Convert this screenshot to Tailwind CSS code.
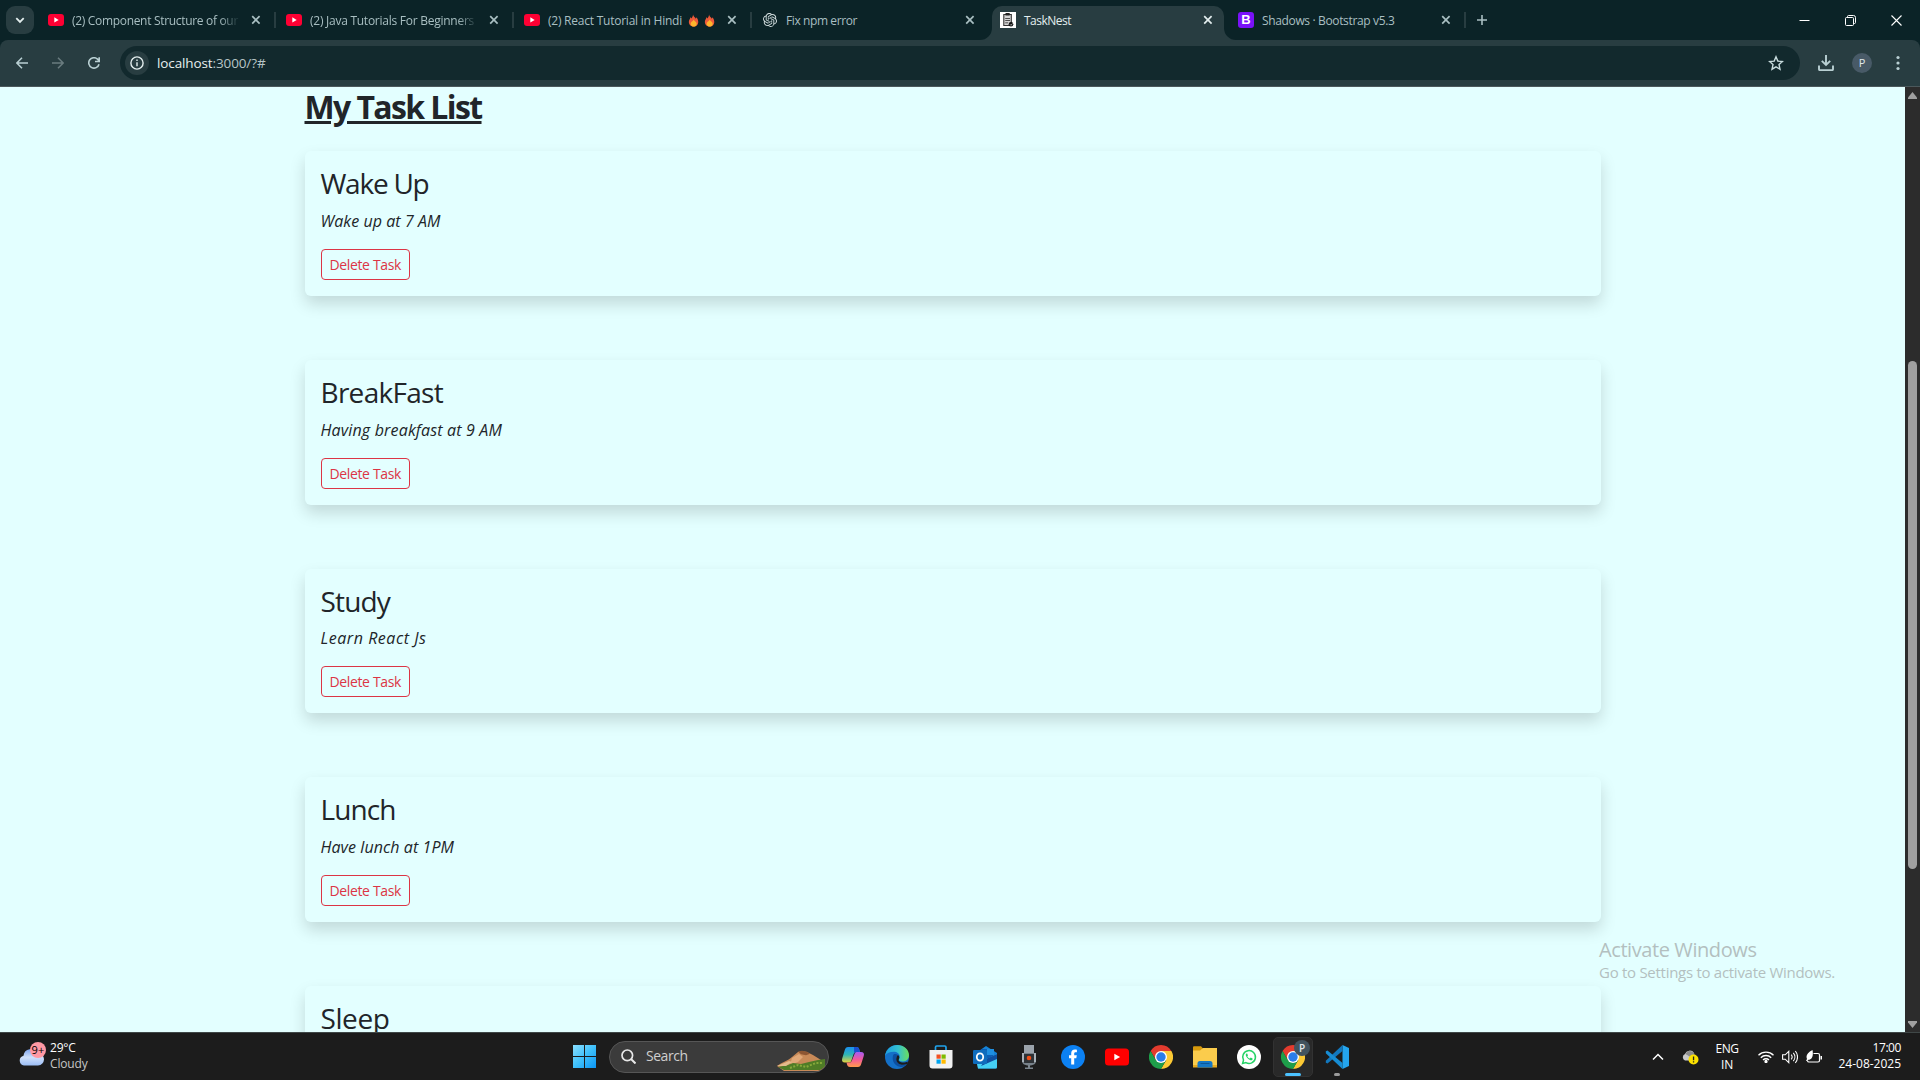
<!DOCTYPE html>
<html lang="en">
<head>
<meta charset="utf-8">
<title>TaskNest</title>
<script src="https://cdn.jsdelivr.net/npm/@tailwindcss/browser@4"></script>
</head>
<body class="w-[1920px] h-[1080px] overflow-hidden flex flex-col bg-[#1c1c1c] font-['Segoe_UI','Open_Sans',sans-serif] text-xs">

<svg class="hidden">
  <symbol id="yt" viewBox="0 0 16 12"><rect width="16" height="12" rx="3" fill="#ff0033"/><path d="M6.3 3.3v5.2L10.7 6z" fill="#fff"/></symbol>
  <symbol id="x" viewBox="0 0 10 10"><path d="M1.2 1.2l7.4 7.4M8.600 1.200l-7.400 7.400" stroke="currentColor" stroke-width="1.7" fill="none"/></symbol>
  <symbol id="fire" viewBox="0 0 12 14"><path d="M5.500.5C6 3 8 3.500 8.500 5c.500-.500.500-1 .5-1.500C10.500 5 11.300 7 11.200 9c-.1 3-2.200 4.700-5 4.700S1 12 .9 9C.8 6.500 2.500 5.500 2.600 3.500c.6.400 1 .8 1.200 1.300C4.800 3.500 5.500 2 5.500.5z" fill="#ee5a3a"/><path d="M6.200 6c.3 1.500 3.400 2.400 3.300 4.700-.1 1.800-1.500 2.800-3.300 2.800S2.800 12.400 2.800 10.700C2.800 8.500 5.700 8 6.200 6z" fill="#fdb52c"/></symbol>
  <symbol id="chrome" viewBox="0 0 24 24">
    <path d="M12 0a12 12 0 0 1 10.400 6H12L6.800 15 1.600 6A12 12 0 0 1 12 0z" fill="#e33b2e"/>
    <path d="M22.400 6A12 12 0 0 1 12 24l5.200-9L12 6z" fill="#fcc934"/>
    <path d="M12 24A12 12 0 0 1 1.600 6l5.200 9 5.200 3 5.200-3z" fill="#1e9e4a"/>
    <circle cx="12" cy="12" r="6" fill="#fff"/><circle cx="12" cy="12" r="4.700" fill="#2b7de9"/>
  </symbol>
</svg>

<!-- Tab strip -->
<header class="relative h-10 shrink-0 bg-[#0b2327] flex items-center text-[#a9bfc2]">
  <div class="ml-1.5 w-7 h-7 rounded-[9px] bg-[#283d41] flex items-center justify-center text-[#e3eeee]">
    <svg class="w-2.5 h-2.5" viewBox="0 0 10 10"><path d="M1.300 3.200L5 6.900l3.700-3.700" stroke="currentColor" stroke-width="1.800" fill="none"/></svg>
  </div>
  <div class="w-[238px] ml-0.5 h-10 flex items-center pl-3 relative">
    <svg class="w-4 h-3 shrink-0"><use href="#yt"/></svg>
    <span class="ml-2 w-[168px] h-5 leading-[21px] overflow-hidden whitespace-nowrap mask-r-from-88% mask-r-to-100%"><span data-w="166">(2) Component Structure of our</span></span>
    <svg class="w-[10px] h-[10px] ml-[11px] shrink-0"><use href="#x"/></svg>
    <i class="absolute right-[-2px] w-0.5 h-4 bg-[#283d41]"></i>
  </div>
  <div class="w-[238px] h-10 flex items-center pl-3 relative">
    <svg class="w-4 h-3 shrink-0"><use href="#yt"/></svg>
    <span class="ml-2 w-[168px] h-5 leading-[21px] overflow-hidden whitespace-nowrap mask-r-from-88% mask-r-to-100%"><span data-w="164">(2) Java Tutorials For Beginners</span></span>
    <svg class="w-[10px] h-[10px] ml-[11px] shrink-0"><use href="#x"/></svg>
    <i class="absolute right-[-2px] w-0.5 h-4 bg-[#283d41]"></i>
  </div>
  <div class="w-[238px] h-10 flex items-center pl-3 relative">
    <svg class="w-4 h-3 shrink-0"><use href="#yt"/></svg>
    <span class="ml-2 w-[168px] h-5 leading-[21px] overflow-hidden whitespace-nowrap flex items-center"><span data-w="134">(2) React Tutorial in Hindi</span><svg class="ml-1.5 w-[11px] h-[13px]"><use href="#fire"/></svg><svg class="ml-[5px] w-[11px] h-[13px]"><use href="#fire"/></svg></span>
    <svg class="w-[10px] h-[10px] ml-[11px] shrink-0"><use href="#x"/></svg>
    <i class="absolute right-[-2px] w-0.5 h-4 bg-[#283d41]"></i>
  </div>
  <div class="w-[238px] h-10 flex items-center pl-3 relative">
    <svg class="w-4 h-4 p-px shrink-0" viewBox="0 0 24 24" fill="#d4dfe0"><path d="M22.280 9.820a5.980 5.980 0 0 0-.52-4.910 6.050 6.050 0 0 0-6.510-2.900A6.070 6.070 0 0 0 4.980 4.180a5.980 5.980 0 0 0-4 2.900 6.050 6.050 0 0 0 .74 7.100 5.980 5.980 0 0 0 .51 4.910 6.050 6.050 0 0 0 6.510 2.900A5.980 5.980 0 0 0 13.260 24a6.060 6.060 0 0 0 5.770-4.210 5.990 5.990 0 0 0 4-2.900 6.060 6.060 0 0 0-.75-7.070zm-9.020 12.610a4.480 4.480 0 0 1-2.880-1.040l.14-.08 4.780-2.760a.8.8 0 0 0 .39-.68v-6.740l2.020 1.170a.07.07 0 0 1 .04.050v5.580a4.500 4.500 0 0 1-4.490 4.500zM3.600 18.300a4.470 4.470 0 0 1-.53-3.010l.14.080 4.780 2.760a.77.77 0 0 0 .78 0l5.840-3.370v2.330a.08.08 0 0 1-.03.060L9.740 19.950A4.500 4.500 0 0 1 3.600 18.300zM2.340 7.900a4.490 4.490 0 0 1 2.370-1.970V11.600a.77.77 0 0 0 .39.680l5.810 3.350-2.020 1.170a.08.08 0 0 1-.07 0l-4.830-2.790A4.500 4.500 0 0 1 2.340 7.900zm16.600 3.860l-5.840-3.390 2.020-1.160a.08.08 0 0 1 .07 0l4.830 2.790a4.490 4.490 0 0 1-.68 8.100v-5.680a.79.79 0 0 0-.4-.66zm2.010-3.020l-.14-.09-4.770-2.780a.78.78 0 0 0-.79 0L9.410 9.230V6.900a.07.07 0 0 1 .03-.06l4.830-2.790a4.500 4.500 0 0 1 6.680 4.660zM8.310 12.860l-2.020-1.160a.08.08 0 0 1-.04-.06V6.070a4.500 4.500 0 0 1 7.380-3.450l-.14.08-4.780 2.760a.8.8 0 0 0-.39.680zm1.100-2.370L12.010 9l2.610 1.500v3l-2.600 1.500-2.610-1.500z"/></svg>
    <span class="ml-2 w-[168px] h-5 leading-[21px] whitespace-nowrap"><span data-w="71">Fix npm error</span></span>
    <svg class="w-[10px] h-[10px] ml-[11px] shrink-0"><use href="#x"/></svg>
  </div>
  <div class="w-[238px] h-10 flex items-center pl-3 relative text-[#e3eeee]">
    <svg class="absolute left-[-8px] top-1.5 w-[256px] h-[34px]" viewBox="0 0 256 34"><path d="M0 34a12 12 0 0 0 12-12V10A10 10 0 0 1 22 0h212a10 10 0 0 1 10 10v12a12 12 0 0 0 12 12z" fill="#283d41"/></svg>
    <svg class="relative w-4 h-4 shrink-0" viewBox="0 0 16 16"><rect width="16" height="16" fill="#fff"/><path d="M3.800 2.500h7.500v11H3.800z" fill="#d5d5d5" stroke="#333" stroke-width="1.100"/><path d="M5.500 1h4.200v2.500H5.500zM5.200 6h4.800v.8H5.200zM5.200 8.200h4.800V9H5.200zM5.200 10.400h3v.8h-3z" fill="#222"/><circle cx="11" cy="12.300" r="2.300" fill="#111"/><path d="M10 12.300l1 1 1.500-1.800" stroke="#fff" stroke-width=".6" fill="none"/></svg>
    <span class="relative ml-2 w-[168px] h-5 leading-[21px]"><span data-w="47">TaskNest</span></span>
    <svg class="relative w-[10px] h-[10px] ml-[11px] shrink-0"><use href="#x"/></svg>
  </div>
  <div class="w-[238px] h-10 flex items-center pl-3 relative">
    <div class="w-4 h-4 shrink-0 rounded-[3px] bg-[#7a12f9] text-white text-[13px] leading-4 font-semibold text-center font-['Liberation_Sans',sans-serif]">B</div>
    <span class="ml-2 w-[168px] h-5 leading-[21px] whitespace-nowrap"><span data-w="132.5">Shadows · Bootstrap v5.3</span></span>
    <svg class="w-[10px] h-[10px] ml-[11px] shrink-0"><use href="#x"/></svg>
    <i class="absolute right-[-2px] w-0.5 h-4 bg-[#283d41]"></i>
  </div>
  <svg class="ml-[13px] w-[10px] h-[10px]" viewBox="0 0 10 10"><path d="M5 0v10M0 5h10" stroke="currentColor" stroke-width="1.600"/></svg>
  <div class="ml-auto pr-[18px] flex items-center gap-[35px] text-white">
    <svg class="w-[11px] h-[11px]" viewBox="0 0 11 11"><path d="M.5 5.500h10" stroke="currentColor"/></svg>
    <svg class="w-[11px] h-[11px]" viewBox="0 0 11 11" fill="none" stroke="currentColor"><rect x=".5" y="2.500" width="8" height="8" rx="1"/><path d="M2.500 2V1.500a1 1 0 0 1 1-1H8.500a2 2 0 0 1 2 2v5a1 1 0 0 1-1 1H9"/></svg>
    <svg class="w-[11px] h-[11px]" viewBox="0 0 11 11"><path d="M.5.5l10 10M10.500.5l-10 10" stroke="currentColor" stroke-width="1.100"/></svg>
  </div>
</header>

<!-- Toolbar -->
<div class="h-[47px] shrink-0 bg-[#0b2327]">
  <div class="h-full bg-[#283d41] rounded-t-lg border-b border-[#4b585b] flex items-center text-[#b9d0d3]">
    <svg class="ml-4 w-3 h-3" viewBox="0 0 12 12" fill="none" stroke="currentColor" stroke-width="1.500"><path d="M12 6H1.200M6 .8L.9 6 6 11.200"/></svg>
    <svg class="ml-6 w-3 h-3 text-[#6a7c7f]" viewBox="0 0 12 12" fill="none" stroke="currentColor" stroke-width="1.500"><path d="M0 6h10.800M6 .8L11.100 6 6 11.200"/></svg>
    <svg class="ml-6 w-3 h-3" viewBox="0 0 12 12" fill="none" stroke="currentColor" stroke-width="1.600"><path d="M11 7.200A5.200 5.200 0 1 1 9.800 2.400L11 3.800M11.200.2v4.300H7"/></svg>
    <div class="ml-5 w-[1680px] h-[34px] rounded-full bg-[#12292d] flex items-center pl-[5px]">
      <div class="w-6 h-6 rounded-full bg-[#283d41] flex items-center justify-center text-[#e3eeee]">
        <svg class="w-3.5 h-3.5" viewBox="0 0 14 14"><circle cx="7" cy="7" r="6.100" fill="none" stroke="currentColor" stroke-width="1.400"/><path d="M6.300 6.200h1.400v4H6.300zM6.300 3.600h1.400V5H6.300z" fill="currentColor"/></svg>
      </div>
      <div class="ml-2 text-[13.5px] text-[#e6efef]"><span data-w="108.500">localhost<span class="text-[#b7c5c7]">:3000/?#</span></span></div>
      <svg class="ml-auto mr-4 w-4 h-4 text-[#c8dcde]" viewBox="0 0 16 16"><path d="M8 1.800l1.800 4.300 4.700.4-3.500 3.100 1 4.600L8 11.800l-4 2.400 1-4.600-3.500-3.100 4.700-.4z" fill="none" stroke="currentColor" stroke-width="1.400"/></svg>
    </div>
    <svg class="ml-[18px] w-4 h-4" viewBox="0 0 16 16" fill="none" stroke="currentColor" stroke-width="1.900"><path d="M8 0v9.500M3.800 5.800L8 10l4.200-4.200M1 10.500v3.700c0 .6.300.9.900.9h12.200c.6 0 .9-.3.900-.9v-3.700"/></svg>
    <div class="ml-[18px] w-5 h-5 rounded-full bg-[#485a67] text-[11px] leading-5 text-center text-[#e0e7ea]">P</div>
    <svg class="w-1 ml-6 h-4" viewBox="0 0 4 16" fill="currentColor"><circle cx="2" cy="2.500" r="1.600"/><circle cx="2" cy="8" r="1.600"/><circle cx="2" cy="13.500" r="1.600"/></svg>
  </div>
</div>

<!-- Page -->
<div class="relative h-[945px] shrink-0 flex bg-[#e3ffff]">
  <main class="flex-1 overflow-hidden text-[#212529] font-['Trebuchet_MS','Open_Sans',sans-serif] text-base">
    <div class="w-[1320px] mx-auto px-3 pt-px">
      <h2 class="text-[32px] leading-[38.400px] font-bold underline decoration-[3px] underline-offset-[2px] whitespace-nowrap"><span data-w="177">My Task List</span></h2>
      <div class="mt-[25px] flex flex-col gap-16">
        <section class="p-4 rounded-md shadow-[0_8px_16px_rgba(0,0,0,0.15)]">
          <h3 class="text-[28px] leading-[33.600px] mb-2"><span data-w="108">Wake Up</span></h3>
          <p class="italic leading-6 mb-4"><span data-w="120">Wake up at 7 AM</span></p>
          <button class="block w-[89.500px] h-[31px] border border-[#dc3545] rounded-[4px] text-[#dc3545] text-sm leading-[21px] py-1 whitespace-nowrap"><span data-w="71.500">Delete Task</span></button>
        </section>
        <section class="p-4 rounded-md shadow-[0_8px_16px_rgba(0,0,0,0.15)]">
          <h3 class="text-[28px] leading-[33.600px] mb-2"><span data-w="122.500">BreakFast</span></h3>
          <p class="italic leading-6 mb-4"><span data-w="181.500">Having breakfast at 9 AM</span></p>
          <button class="block w-[89.500px] h-[31px] border border-[#dc3545] rounded-[4px] text-[#dc3545] text-sm leading-[21px] py-1 whitespace-nowrap"><span data-w="71.500">Delete Task</span></button>
        </section>
        <section class="p-4 rounded-md shadow-[0_8px_16px_rgba(0,0,0,0.15)]">
          <h3 class="text-[28px] leading-[33.600px] mb-2"><span data-w="69.500">Study</span></h3>
          <p class="italic leading-6 mb-4"><span data-w="106">Learn React Js</span></p>
          <button class="block w-[89.500px] h-[31px] border border-[#dc3545] rounded-[4px] text-[#dc3545] text-sm leading-[21px] py-1 whitespace-nowrap"><span data-w="71.500">Delete Task</span></button>
        </section>
        <section class="p-4 rounded-md shadow-[0_8px_16px_rgba(0,0,0,0.15)]">
          <h3 class="text-[28px] leading-[33.600px] mb-2"><span data-w="75">Lunch</span></h3>
          <p class="italic leading-6 mb-4"><span data-w="133.500">Have lunch at 1PM</span></p>
          <button class="block w-[89.500px] h-[31px] border border-[#dc3545] rounded-[4px] text-[#dc3545] text-sm leading-[21px] py-1 whitespace-nowrap"><span data-w="71.500">Delete Task</span></button>
        </section>
        <section class="p-4 rounded-md shadow-[0_8px_16px_rgba(0,0,0,0.15)]">
          <h3 class="text-[28px] leading-[33.600px] mb-2"><span data-w="69">Sleep</span></h3>
          <p class="h-[71px]"></p>
        </section>
      </div>
    </div>
  </main>
  <!-- Scrollbar -->
  <div class="w-[15px] bg-[#2c2c2c] flex flex-col items-center text-[#9f9f9f]">
    <svg class="mt-[5px] w-[9px] h-[7px]" viewBox="0 0 9 7"><path d="M4.500 0L9 5.500V7H0V5.500z" fill="currentColor"/></svg>
    <div class="mt-[262px] w-[9px] h-[508px] rounded-full bg-[#9f9f9f]"></div>
    <svg class="mt-auto mb-1 w-[9px] h-[7px]" viewBox="0 0 9 7"><path d="M4.500 7L9 1.500V0H0v1.500z" fill="currentColor"/></svg>
  </div>
  <!-- Activation watermark -->
  <div class="absolute left-[1599px] top-[849px] text-[#b3bfc0] whitespace-nowrap font-['Open_Sans',sans-serif]">
    <div class="text-[20px] leading-[28px]"><span data-w="157.500">Activate Windows</span></div>
    <div class="text-[15px] leading-[17px]"><span data-w="236">Go to Settings to activate Windows.</span></div>
  </div>
</div>

<!-- Taskbar -->
<footer class="h-12 shrink-0 bg-[#1c1c1c] border-t border-[#3f4747] flex items-center text-white">
  <div class="w-[562px] pl-[18px] flex items-center">
    <div class="relative w-[26px] h-7 -top-[2px]">
      <svg class="w-[26px] h-7" viewBox="0 0 26 28"><defs><linearGradient id="cl" x2="0" y2="1"><stop stop-color="#7da4ee"/><stop offset=".5" stop-color="#cfe0fb"/><stop offset="1" stop-color="#9bbdf5"/></linearGradient></defs><path d="M6 24.500a5 5 0 0 1-.5-9.800A7.500 7.500 0 0 1 19.500 12a6.200 6.200 0 0 1 .5 12.500z" fill="url(#cl)"/></svg>
      <div class="absolute left-3 top-[1px] w-4 h-4 rounded-full bg-[#ff99a4] text-black text-[11px] leading-4 text-center whitespace-nowrap"><span data-w="13">9+</span></div>
    </div>
    <div class="ml-[6px] leading-4 whitespace-nowrap -mt-px"><div><span data-w="25.500">29°C</span></div><div class="text-[#c6c6c6]"><span data-w="37.500">Cloudy</span></div></div>
  </div>
  <div class="w-[45px] flex justify-center">
    <svg class="w-[23px] h-[23px]" viewBox="0 0 23 23"><defs><linearGradient id="win" x2="1" y2="1"><stop stop-color="#8adfff"/><stop offset=".5" stop-color="#3fc0fa"/><stop offset="1" stop-color="#0a95f5"/></linearGradient></defs><path d="M0 0h11v11H0zM12 0h11v11H12zM0 12h11v11H0zM12 12h11v11H12z" fill="url(#win)"/></svg>
  </div>
  <div class="ml-0.5 w-[220px] h-8 rounded-full bg-[#3b3b3b] border border-[#565656] flex items-center pl-[11px] overflow-hidden">
    <svg class="w-[15px] h-[15px]" viewBox="0 0 15 15" fill="none" stroke="#e8e8e8" stroke-width="1.700"><circle cx="6.300" cy="6.300" r="5.300"/><path d="M10 10l4.500 4.500" stroke-width="2"/></svg>
    <span class="ml-2.5 text-sm leading-5 -mt-px text-[#cfcfcf]"><span data-w="41.500">Search</span></span>
    <svg class="ml-auto mr-0.5 w-[50px] h-[30px]" viewBox="0 0 50 30"><path d="M1 24c5-4 11-5 15-9l6-5 4-1 5 1 6 3 8 5 4 1v8l-5 2H8z" fill="#c88a58"/><path d="M22 9.500l4-.8 5 1 3 2-4 1.500-5-1z" fill="#8d5632"/><path d="M16 16l7-4 4 3-5 5-8 3z" fill="#e0a878"/><path d="M2 25l10-2 5-2 8 1 8-2 9-2 7-1v8l-5 3H8z" fill="#4f7c26"/><path d="M14 26l8-3 8 2 10-4 7 0" stroke="#86a83a" stroke-width="2" stroke-dasharray="2 1.500" fill="none"/><path d="M1 24l12-5 3 1-6 4z" fill="#e3bb8d"/></svg>
  </div>
  <div class="ml-0.5 flex items-center">
    <div class="w-11 flex justify-center"><svg class="w-6 h-6" viewBox="0 0 24 24"><defs><linearGradient id="co1" x2="0" y2="1"><stop stop-color="#1b8ff0"/><stop offset=".5" stop-color="#2fb6b4"/><stop offset="1" stop-color="#e8d33c"/></linearGradient><linearGradient id="co2" x2="0" y2="1"><stop stop-color="#a45cf5"/><stop offset=".5" stop-color="#f2599a"/><stop offset="1" stop-color="#ff9a4a"/></linearGradient></defs><path d="M7 2h8.500c1.500 0 2.200.8 2.600 2l.9 3h-3c-2 0-3 .8-3.600 2.800L10.600 15c-.6 1.800-1.300 2.600-3 2.600H4c-2.500 0-3.500-1.600-2.800-4L3.800 5C4.400 3 5.300 2 7 2z" fill="url(#co1)"/><path d="M13 2h2.500c1.500 0 2.200.8 2.600 2l.9 3h-3c-1.500 0-2.300.4-2.900 1.500z" fill="#1a4fd0"/><path d="M17 22H9c-1.500 0-2.400-.8-2.800-2l-.7-2.400h2.300c2 0 2.800-.8 3.400-2.800L13.500 9c.6-1.600 1.300-2 3-2H20c2.500 0 3.500 1.400 2.800 3.800L20.200 19c-.6 2-1.500 3-3.200 3z" fill="url(#co2)"/></svg></div>
    <div class="w-11 flex justify-center"><svg class="w-6 h-6" viewBox="0 0 24 24"><defs><linearGradient id="ed" y1=".3" x2="1" y2=".3"><stop stop-color="#1b9de2"/><stop offset=".55" stop-color="#35c1d0"/><stop offset="1" stop-color="#6be05a"/></linearGradient></defs><circle cx="12" cy="12" r="12" fill="#1470c8"/><path d="M0 11C.8 4.500 6 0 12.300 0 19 0 24 4.800 24 10.300c0 3.700-2.700 6.200-6 6.200-2.600 0-4.300-.9-4.300-2 0-.7 1-1.200 1-3 0-2.700-2.600-4.800-6-4.800C5 6.700 1.500 8 0 11z" fill="url(#ed)"/><path d="M8.500 9.500c-2 4-.5 11 7 12.500 2.400.4 5-1 6.500-3-6 2.500-12-1-10.500-6.500.3-1.200 1-2 1.500-2.500-1.300-1-3-1.200-4.500-.5z" fill="#0c4fa0"/><path d="M11.500 12.500C10 18 16 21.500 22 19c.7-.8 1-2 .5-2.500-2 1.300-6.800 1.300-8.300-.3-.8-.8-.6-1.300-.3-2 .6-1 .8-3-.9-4.200-.7.600-1.200 1.400-1.500 2.500z" fill="#1c1c1c"/></svg></div>
    <div class="w-11 flex justify-center"><svg class="w-6 h-6" viewBox="0 0 24 24"><path d="M6.500 6V2.200A1.200 1.200 0 0 1 7.700 1h8.100A1.200 1.200 0 0 1 17 2.200V6" fill="none" stroke="#1fa3ec" stroke-width="1.700"/><path d="M.5 5h23v15.500a3 3 0 0 1-3 3h-17a3 3 0 0 1-3-3z" fill="#f1f1f1"/><path d="M7.500 9.500h4.200v4.200H7.500z" fill="#f25022"/><path d="M12.500 9.500h4.200v4.200h-4.200z" fill="#7fba00"/><path d="M7.500 14.500h4.200v4.200H7.500z" fill="#00a4ef"/><path d="M12.500 14.500h4.200v4.200h-4.200z" fill="#ffb900"/></svg></div>
    <div class="w-11 flex justify-center"><svg class="w-6 h-6" viewBox="0 0 24 24"><path d="M3 8l10-7 11 7v14a1.500 1.500 0 0 1-1.500 1.500H5z" fill="#1583d8"/><path d="M8 4h12v9H8z" fill="#0c5eb5"/><path d="M14 4h7v6h-7z" fill="#1f8fe0"/><path d="M24 9v13a1.500 1.500 0 0 1-1.500 1.500H5L4 19z" fill="#45d0f5"/><path d="M13 14l11-5v5L8 21z" fill="#0f4fa0"/><rect y="5" width="14" height="14" rx="1.300" fill="#0f6cbd"/><ellipse cx="7" cy="12" rx="3.200" ry="3.700" fill="none" stroke="#fff" stroke-width="1.800"/></svg></div>
    <div class="w-11 flex justify-center"><svg class="w-6 h-6" viewBox="0 0 24 24"><path d="M7 0h10v9H7z" fill="#9ba3ab"/><path d="M5 8v8c0 3 3 4.500 7 4.500s7-1.500 7-4.500V8" fill="#77818a"/><path d="M7 9h10v9H7z" fill="#2e3236"/><path d="M5 8h2v9H5zM17 8h2v9h-2z" fill="#a9b1b8"/><circle cx="12" cy="13" r="2.300" fill="#f04e16"/><path d="M11 20h2v2.500h3V24H8v-1.500h3z" fill="#7b858e"/></svg></div>
    <div class="w-11 flex justify-center"><svg class="w-6 h-6" viewBox="0 0 24 24"><circle cx="12" cy="12" r="12" fill="#0c81f3"/><path d="M10.200 19.500v-6.300H8V10.300h2.200V8.500c0-2.700 1.300-4 3.800-4 .8 0 1.400.1 1.900.2v2.500h-1.300c-1.100 0-1.400.5-1.400 1.500v1.600h2.600l-.5 2.900h-2.100v6.300z" fill="#fff"/></svg></div>
    <div class="w-11 flex justify-center"><svg class="w-6 h-6" viewBox="0 0 24 24"><rect y="3.500" width="24" height="17" rx="3.500" fill="#f00"/><path d="M9.300 8.800v6.400l5.800-3.200z" fill="#fff"/></svg></div>
    <div class="w-11 flex justify-center"><svg class="w-6 h-6"><use href="#chrome"/></svg></div>
    <div class="w-11 flex justify-center"><svg class="w-6 h-6" viewBox="0 0 24 24"><path d="M0 2.500C0 1.700.5 1.200 1.300 1.200H8l2 2.300h0V8H0z" fill="#d89a0c"/><path d="M0 5.500h7l3-2.500h14v19H0z" fill="#fbcc4c"/><path d="M0 20h24v2.500H0z" fill="#e8aa1e"/><path d="M4.500 18.500a2.500 2.500 0 0 1 2.500-2.500h10a2.500 2.500 0 0 1 2.500 2.500v4h-15z" fill="#1577c5"/><path d="M7.500 18.500h9" stroke="#0c5798"/></svg></div>
    <div class="w-11 flex justify-center"><svg class="w-6 h-6" viewBox="0 0 24 24"><circle cx="12" cy="12" r="12" fill="#fff"/><path d="M5.600 18.500l.9-3.300a6.400 6.400 0 1 1 2.400 2.400z" fill="none" stroke="#25d366" stroke-width="1.500"/><path d="M9.500 8.500c-1.500.8-.7 3 1.300 4.900s4 2.500 4.700 1l.1-.8-1.900-1-.9 1c-1.100-.4-2-1.200-2.500-2.300l.7-.8-.8-2z" fill="#25d366"/></svg></div>
    <div class="w-11 flex justify-center"><div class="relative w-10 h-10 rounded-[5px] bg-[#292929] border border-[#323232] flex items-center justify-center"><svg class="w-6 h-6"><use href="#chrome"/></svg><div class="absolute left-[20px] top-[2px] w-4 h-4 rounded-full bg-[#42545f] text-[10px] leading-4 text-center text-[#e3e9ec] font-semibold">P</div><div class="absolute bottom-0 left-[11px] w-4 h-[3px] rounded-full bg-[#4cc2ff]"></div></div></div>
    <div class="w-11 flex justify-center relative"><svg class="w-6 h-6" viewBox="0 0 24 24"><path d="M17.500 0L24 3v18l-6.500 3z" fill="#24a5ee"/><path d="M17.500 0v6L2.500 18.500.8 17.700v-2L17.500 0z" fill="#1278be"/><path d="M17.500 24v-6L2.500 5.500.8 6.300v2L17.500 24z" fill="#178dd4"/></svg><i class="absolute left-[19px] top-[28px] w-1.5 h-[3px] rounded-full bg-[#9a9a9a]"></i></div>
  </div>
  <div class="ml-auto pr-[19px] flex items-center">
    <svg class="w-3 h-3" viewBox="0 0 12 12"><path d="M1 8.500l5-5 5 5" fill="none" stroke="#fff" stroke-width="1.500"/></svg>
    <svg class="ml-[17px] w-[18px] h-4" viewBox="0 0 18 16"><path d="M4 11.500a3.500 3.500 0 0 1 0-6.500A5 5 0 0 1 13 4l1 7.500z" fill="#c9c9c9"/><path d="M4.500 5A5 5 0 0 1 13 4l1 4-3 1z" fill="#8c8c8c"/><circle cx="12.500" cy="10.500" r="5" fill="#fce100"/><path d="M11.900 7.500h1.300v3.800h-1.300zM11.900 12.200h1.300v1.300h-1.300z" fill="#222"/></svg>
    <div class="ml-[14px] w-[28px] mr-px text-center leading-4"><div><span data-w="23">ENG</span></div><div><span data-w="12">IN</span></div></div>
    <svg class="ml-4 w-4 h-3" viewBox="0 0 16 12" fill="none" stroke="#fff" stroke-width="1.300"><path d="M.5 4.300a10.600 10.600 0 0 1 15 0M2.800 6.700a7.300 7.300 0 0 1 10.400 0M5 9a4.200 4.200 0 0 1 6 0"/><circle cx="8" cy="10.500" r="1" fill="#fff"/></svg>
    <svg class="ml-2 w-4 h-3.5" viewBox="0 0 16 14" fill="none" stroke="#fff" stroke-width="1.100"><path d="M.6 4.800h2.600L6.800 1.300v11.400L3.200 9.200H.6z"/><path d="M9.200 4.600a3.800 3.800 0 0 1 0 4.800M11.300 2.800a6.500 6.500 0 0 1 0 8.400M13.300 1a9.200 9.200 0 0 1 0 12"/></svg>
    <svg class="ml-2 w-4 h-3.5" viewBox="0 0 16 14"><path d="M7.500 3.500H12a1.500 1.500 0 0 1 1.500 1.500v5.500A1.500 1.500 0 0 1 12 12H3a1.500 1.500 0 0 1-1.500-1" fill="none" stroke="#fff" stroke-width="1.200"/><path d="M14.500 6H16v3.500h-1.500zM6.500 0C1.500 2.500-.5 5.500 1 9l-1 2h1.500l.8-1.200C6.500 9.500 7.500 5 6.500 0z" fill="#fff"/></svg>
    <div class="ml-4 w-[63px] text-right leading-4 whitespace-nowrap -mt-px"><div><span data-w="28.500">17:00</span></div><div><span data-w="62.500">24-08-2025</span></div></div>
  </div>
</footer>

<script>
  // Adjust tracking so each label fills its intended width
  function fitLabels() {
    document.querySelectorAll('[data-w]').forEach(el => {
      el.style.letterSpacing = '0px';
      const gap = parseFloat(el.dataset.w) - el.getBoundingClientRect().width;
      el.style.letterSpacing = (gap / el.textContent.length) + 'px';
    });
  }
  fitLabels();
  addEventListener('load', fitLabels);
  document.fonts.ready.then(fitLabels);
  new ResizeObserver(fitLabels).observe(document.body);
  [50, 150, 400].forEach(t => setTimeout(fitLabels, t));
</script>
</body>
</html>
